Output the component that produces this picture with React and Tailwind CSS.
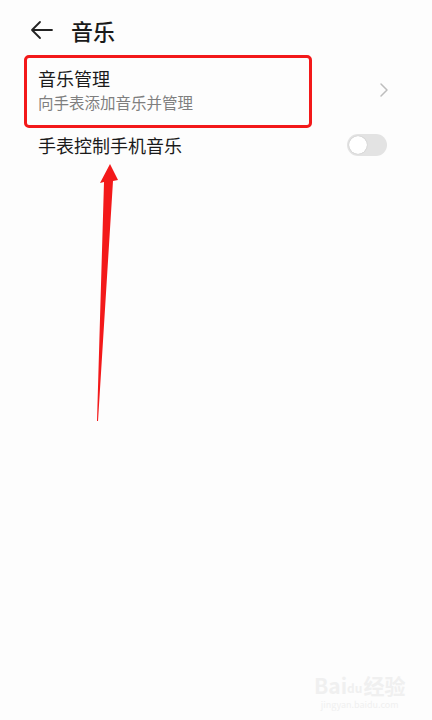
import React from "react";

export default function App() {
  const font = { fontFamily: '"Noto Sans CJK SC", "Noto Sans", sans-serif' };
  return (
    <div className="relative w-[432px] h-[720px] bg-[#fdfdfd] overflow-hidden text-[#1a1a1a]" style={font}>
      {/* header */}
      <div className="flex items-center h-[60px] pl-[30px]">
        <svg width="24" height="20" viewBox="0 0 24 20" fill="none" stroke="#222" strokeWidth="1.8" strokeLinecap="round" strokeLinejoin="round">
          <path d="M22 10H2M10 2L2 10l8 8" />
        </svg>
        <span className="ml-[17px] text-[22px] font-medium leading-none">音乐</span>
      </div>
      {/* list */}
      <div className="pl-[38px] pr-[46px]">
        <div className="flex items-center justify-between pt-[6px]">
          <div className="flex flex-col">
            <span className="text-[18px] leading-[24px]">音乐管理</span>
            <span className="text-[15.5px] leading-[22px] text-[#7f7f7f] mt-[1px]">向手表添加音乐并管理</span>
          </div>
          <svg width="10" height="16" viewBox="0 0 10 16" fill="none" stroke="#bdbdbd" strokeWidth="1.5" strokeLinecap="round" strokeLinejoin="round" className="mr-[-3px]">
            <path d="M2 2l6 6-6 6" />
          </svg>
        </div>
        <div className="flex items-center justify-between h-[24px] mt-[20px]">
          <span className="text-[18px] leading-[24px]">手表控制手机音乐</span>
          <div className="w-[40px] h-[22px] rounded-full bg-[#e3e3e3] flex items-center px-[2px] mr-[-1px]">
            <div className="w-[18px] h-[18px] rounded-full bg-white shadow-[0_0_1px_rgba(0,0,0,0.3)]" />
          </div>
        </div>
      </div>
      {/* red highlight box */}
      <div className="absolute left-[24px] top-[55px] w-[288px] h-[73px] border-[3px] border-[#f3191a] rounded-[5px]" />
      {/* red arrow */}
      <svg className="absolute left-0 top-0" width="432" height="720" viewBox="0 0 432 720">
        <path d="M97 421 L104 182 L100 183 L110 164 L118 180 L113 181 L98 421 Z" fill="#f3191a" />
      </svg>
      {/* watermark */}
      <div className="absolute left-[314px] top-[673px] flex flex-col items-center text-[#f0f0f0]">
        <div className="flex items-end h-[24px] text-[21px] font-bold leading-[24px]">
          <span>Bai</span>
          <span className="text-[12px] leading-[18px]">du</span>
          <span className="ml-[1px]">经验</span>
        </div>
        <div className="text-[9px] leading-[12px] mt-[2px]">jingyan.baidu.com</div>
      </div>
    </div>
  );
}
